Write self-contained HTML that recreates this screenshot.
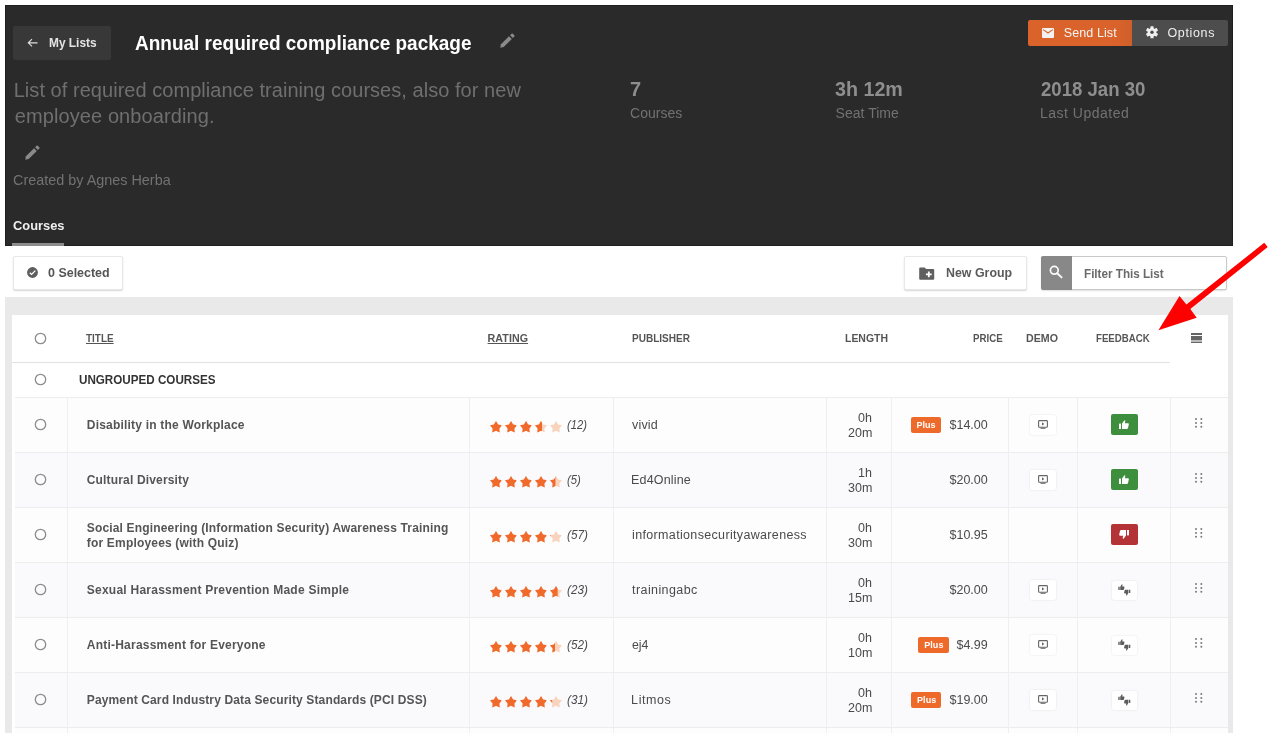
<!DOCTYPE html>
<html><head><meta charset="utf-8"><style>
html,body{margin:0;padding:0;}
body{width:1273px;height:742px;overflow:hidden;background:#fff;position:relative;font-family:"Liberation Sans", sans-serif;}
.a{position:absolute;box-sizing:border-box;}
.t{position:absolute;white-space:nowrap;font-family:"Liberation Sans", sans-serif;}
svg{position:absolute;overflow:visible;}
</style></head><body>
<div class="a" style="left:5px;top:5px;width:1228px;height:241px;background:#2a2a2a;border:1px solid #1f1f1f;"></div>
<div class="a" style="left:12.5px;top:25.5px;width:98px;height:34px;background:#383838;border-radius:2px;"></div>
<svg style="left:27px;top:38px" width="12" height="10" viewBox="0 0 12 10"><path d="M1.3 4.8H10.5M5 1.2L1.3 4.8L5 8.4" fill="none" stroke="#dedede" stroke-width="1.15"/></svg>
<svg style="left:499.2px;top:33.2px" width="16" height="16" viewBox="0 0 15 15"><path d="M1.2 13.8L1.8 10.6L9.4 3L12 5.6L4.4 13.2Z" fill="#8a8a8a"/><path d="M10.4 2L11.8 0.6Q12.3 0.1 12.8 0.6L14.4 2.2Q14.9 2.7 14.4 3.2L13 4.6Z" fill="#8a8a8a"/></svg>
<svg style="left:24.4px;top:145.2px" width="16" height="16" viewBox="0 0 15 15"><path d="M1.2 13.8L1.8 10.6L9.4 3L12 5.6L4.4 13.2Z" fill="#8a8a8a"/><path d="M10.4 2L11.8 0.6Q12.3 0.1 12.8 0.6L14.4 2.2Q14.9 2.7 14.4 3.2L13 4.6Z" fill="#8a8a8a"/></svg>
<div class="a" style="left:1028px;top:20px;width:103.5px;height:26px;background:linear-gradient(90deg,#d9632b 0%,#d9632b 85%,#cf5f2a 100%);border-radius:2px 0 0 2px;"></div>
<div class="a" style="left:1131.5px;top:20px;width:96px;height:26px;background:#4d4d4d;border-radius:0 2px 2px 0;"></div>
<svg style="left:1042px;top:27.5px" width="12" height="10" viewBox="0 0 12 10"><rect x="0" y="0" width="12" height="10" rx="1" fill="#f2f2f2"/><path d="M1.2 1.6L6 5L10.8 1.6" fill="none" stroke="#d9632b" stroke-width="1.1"/></svg>
<svg style="left:1146px;top:26px" width="12" height="12.5" viewBox="-6 -6.25 12 12.5"><g fill="#f0f0f0"><circle r="4.3"/><rect x="-1.6" y="-6.1" width="3.2" height="3" rx="0.6" transform="rotate(0)"/><rect x="-1.6" y="-6.1" width="3.2" height="3" rx="0.6" transform="rotate(60)"/><rect x="-1.6" y="-6.1" width="3.2" height="3" rx="0.6" transform="rotate(120)"/><rect x="-1.6" y="-6.1" width="3.2" height="3" rx="0.6" transform="rotate(180)"/><rect x="-1.6" y="-6.1" width="3.2" height="3" rx="0.6" transform="rotate(240)"/><rect x="-1.6" y="-6.1" width="3.2" height="3" rx="0.6" transform="rotate(300)"/></g><circle r="1.7" fill="#4d4d4d"/></svg>
<div class="a" style="left:12px;top:243px;width:52px;height:3px;background:#8c8c8c;"></div>
<div class="a" style="left:13px;top:256px;width:110px;height:34px;background:#fff;border:1px solid #e8e8e8;border-radius:2px;box-shadow:0 1px 1.5px rgba(0,0,0,0.16);"></div>
<svg style="left:27px;top:267px" width="11" height="11" viewBox="0 0 11 11"><circle cx="5.5" cy="5.5" r="5.4" fill="#5e5e5e"/><path d="M2.8 5.8L4.6 7.4L8.3 3.6" fill="none" stroke="#fff" stroke-width="1.3"/></svg>
<div class="a" style="left:904px;top:256px;width:123px;height:34px;background:#fff;border:1px solid #e8e8e8;border-radius:2px;box-shadow:0 1px 1.5px rgba(0,0,0,0.16);"></div>
<svg style="left:919px;top:266.5px" width="15.5" height="13" viewBox="0 0 15.5 13"><path d="M1.2 0.5H5.6L7.3 2H14.2Q15.2 2 15.2 3V11.8Q15.2 12.8 14.2 12.8H1.2Q0.2 12.8 0.2 11.8V1.5Q0.2 0.5 1.2 0.5Z" fill="#5f5f5f"/><path d="M9.8 4.4V10.2M6.9 7.3H12.7" stroke="#fff" stroke-width="1.8"/></svg>
<div class="a" style="left:1041px;top:256px;width:186px;height:34px;background:#fff;border:1px solid #c9c9c9;border-radius:2px;box-shadow:0 1px 1.5px rgba(0,0,0,0.12);"></div>
<div class="a" style="left:1041px;top:256px;width:31px;height:34px;background:#888888;border-radius:2px 0 0 2px;"></div>
<svg style="left:1049px;top:265px" width="14" height="14" viewBox="0 0 14 14"><circle cx="5.3" cy="5.3" r="3.9" fill="none" stroke="#fafafa" stroke-width="1.7"/><path d="M8.2 8.2L12.6 12.4" stroke="#fafafa" stroke-width="1.9" stroke-linecap="round"/></svg>
<div class="a" style="left:5px;top:297px;width:1228px;height:436px;background:#e9e9e9;"></div>
<div class="a" style="left:12px;top:315px;width:1216px;height:418px;background:#fff;"></div>
<div class="a" style="left:12px;top:362px;width:1158px;height:1px;background:#e2e2e2;"></div>
<svg style="left:34.4px;top:331.5px" width="13" height="13" viewBox="0 0 13 13"><circle cx="6.5" cy="6.5" r="5.2" fill="none" stroke="#8c8c8c" stroke-width="1.3"/></svg>
<svg style="left:34.4px;top:372.8px" width="13" height="13" viewBox="0 0 13 13"><circle cx="6.5" cy="6.5" r="5.2" fill="none" stroke="#8c8c8c" stroke-width="1.3"/></svg>
<div class="a" style="left:1191px;top:333px;width:11px;height:1.8px;background:#666;"></div>
<div class="a" style="left:1191px;top:336.2px;width:11px;height:3.6px;background:#666;"></div>
<div class="a" style="left:1191px;top:339.8px;width:11px;height:2.2px;background:#bbb;"></div>
<div class="a" style="left:1191px;top:342px;width:11px;height:1.2px;background:#666;"></div>
<div class="a" style="left:15px;top:397px;width:1213px;height:55px;background:#fdfdfd;border-top:1px solid #ededed;"></div>
<div class="a" style="left:67px;top:397px;width:1px;height:55px;background:#efefef;"></div>
<div class="a" style="left:469px;top:397px;width:1px;height:55px;background:#efefef;"></div>
<div class="a" style="left:613px;top:397px;width:1px;height:55px;background:#efefef;"></div>
<div class="a" style="left:826px;top:397px;width:1px;height:55px;background:#efefef;"></div>
<div class="a" style="left:891px;top:397px;width:1px;height:55px;background:#efefef;"></div>
<div class="a" style="left:1008px;top:397px;width:1px;height:55px;background:#efefef;"></div>
<div class="a" style="left:1077px;top:397px;width:1px;height:55px;background:#efefef;"></div>
<div class="a" style="left:1170px;top:397px;width:1px;height:55px;background:#efefef;"></div>
<svg style="left:34.4px;top:417.5px" width="13" height="13" viewBox="0 0 13 13"><circle cx="6.5" cy="6.5" r="5.2" fill="none" stroke="#8c8c8c" stroke-width="1.3"/></svg>
<svg style="left:489.6px;top:420.5px" width="74" height="12" viewBox="0 0 74 12"><g transform="translate(0,0)"><path d="M6.00 0.00L8.07 3.45L11.99 4.35L9.36 7.39L9.70 11.40L6.00 9.83L2.30 11.40L2.64 7.39L0.01 4.35L3.93 3.45Z" fill="#f8d3be"/><clipPath id="c0_0"><rect x="0" y="0" width="11.50" height="12"/></clipPath><path d="M6.00 0.00L8.07 3.45L11.99 4.35L9.36 7.39L9.70 11.40L6.00 9.83L2.30 11.40L2.64 7.39L0.01 4.35L3.93 3.45Z" fill="#ef6a2b" clip-path="url(#c0_0)"/></g><g transform="translate(15,0)"><path d="M6.00 0.00L8.07 3.45L11.99 4.35L9.36 7.39L9.70 11.40L6.00 9.83L2.30 11.40L2.64 7.39L0.01 4.35L3.93 3.45Z" fill="#f8d3be"/><clipPath id="c0_1"><rect x="0" y="0" width="11.50" height="12"/></clipPath><path d="M6.00 0.00L8.07 3.45L11.99 4.35L9.36 7.39L9.70 11.40L6.00 9.83L2.30 11.40L2.64 7.39L0.01 4.35L3.93 3.45Z" fill="#ef6a2b" clip-path="url(#c0_1)"/></g><g transform="translate(30,0)"><path d="M6.00 0.00L8.07 3.45L11.99 4.35L9.36 7.39L9.70 11.40L6.00 9.83L2.30 11.40L2.64 7.39L0.01 4.35L3.93 3.45Z" fill="#f8d3be"/><clipPath id="c0_2"><rect x="0" y="0" width="11.50" height="12"/></clipPath><path d="M6.00 0.00L8.07 3.45L11.99 4.35L9.36 7.39L9.70 11.40L6.00 9.83L2.30 11.40L2.64 7.39L0.01 4.35L3.93 3.45Z" fill="#ef6a2b" clip-path="url(#c0_2)"/></g><g transform="translate(45,0)"><path d="M6.00 0.00L8.07 3.45L11.99 4.35L9.36 7.39L9.70 11.40L6.00 9.83L2.30 11.40L2.64 7.39L0.01 4.35L3.93 3.45Z" fill="#f8d3be"/><clipPath id="c0_3"><rect x="0" y="0" width="7.10" height="12"/></clipPath><path d="M6.00 0.00L8.07 3.45L11.99 4.35L9.36 7.39L9.70 11.40L6.00 9.83L2.30 11.40L2.64 7.39L0.01 4.35L3.93 3.45Z" fill="#ef6a2b" clip-path="url(#c0_3)"/></g><g transform="translate(60,0)"><path d="M6.00 0.00L8.07 3.45L11.99 4.35L9.36 7.39L9.70 11.40L6.00 9.83L2.30 11.40L2.64 7.39L0.01 4.35L3.93 3.45Z" fill="#f8d3be"/></g></svg>
<div class="a" style="left:910.6px;top:416.8px;width:30.899999999999977px;height:16.4px;background:#ee6a2b;border-radius:2px;"></div>
<div class="a" style="left:1030px;top:414.5px;width:26px;height:20px;background:#fff;border-radius:2px;box-shadow:0 0 2px rgba(0,0,0,0.12);"></div>
<svg style="left:1037.5px;top:420px" width="10" height="9" viewBox="0 0 10 9"><rect x="0.6" y="0.6" width="8.8" height="6.6" rx="0.8" fill="none" stroke="#666" stroke-width="1.1"/><path d="M4 2.3L6.4 3.9L4 5.5Z" fill="#666"/><path d="M2.5 8.3H7.5" stroke="#666" stroke-width="1"/></svg>
<div class="a" style="left:1111px;top:414.3px;width:27px;height:20.5px;background:#3d8f3d;border-radius:2px;"></div>
<svg style="left:1119px;top:419.5px" width="10" height="9" viewBox="0 0 10 9"><rect x="0" y="3.6" width="2" height="5.4" fill="#fff"/><path d="M3 3.6L5.2 0.4Q6.2 -0.2 6.3 1L5.9 3.2H9Q10 3.3 9.8 4.4L9 8Q8.8 9 7.8 9H3Z" fill="#fff"/></svg>
<svg style="left:1195px;top:418.2px" width="8" height="10" viewBox="0 0 8 10"><circle cx="1.0" cy="1.0" r="1.0" fill="#7a7a7a"/><circle cx="1.0" cy="4.9" r="1.0" fill="#7a7a7a"/><circle cx="1.0" cy="8.8" r="1.0" fill="#7a7a7a"/><circle cx="6.3" cy="1.0" r="1.0" fill="#7a7a7a"/><circle cx="6.3" cy="4.9" r="1.0" fill="#7a7a7a"/><circle cx="6.3" cy="8.8" r="1.0" fill="#7a7a7a"/></svg>
<div class="a" style="left:15px;top:452px;width:1213px;height:55px;background:#faf9fc;border-top:1px solid #ededed;"></div>
<div class="a" style="left:67px;top:452px;width:1px;height:55px;background:#efefef;"></div>
<div class="a" style="left:469px;top:452px;width:1px;height:55px;background:#efefef;"></div>
<div class="a" style="left:613px;top:452px;width:1px;height:55px;background:#efefef;"></div>
<div class="a" style="left:826px;top:452px;width:1px;height:55px;background:#efefef;"></div>
<div class="a" style="left:891px;top:452px;width:1px;height:55px;background:#efefef;"></div>
<div class="a" style="left:1008px;top:452px;width:1px;height:55px;background:#efefef;"></div>
<div class="a" style="left:1077px;top:452px;width:1px;height:55px;background:#efefef;"></div>
<div class="a" style="left:1170px;top:452px;width:1px;height:55px;background:#efefef;"></div>
<svg style="left:34.4px;top:472.5px" width="13" height="13" viewBox="0 0 13 13"><circle cx="6.5" cy="6.5" r="5.2" fill="none" stroke="#8c8c8c" stroke-width="1.3"/></svg>
<svg style="left:489.6px;top:475.5px" width="74" height="12" viewBox="0 0 74 12"><g transform="translate(0,0)"><path d="M6.00 0.00L8.07 3.45L11.99 4.35L9.36 7.39L9.70 11.40L6.00 9.83L2.30 11.40L2.64 7.39L0.01 4.35L3.93 3.45Z" fill="#f8d3be"/><clipPath id="c1_0"><rect x="0" y="0" width="11.50" height="12"/></clipPath><path d="M6.00 0.00L8.07 3.45L11.99 4.35L9.36 7.39L9.70 11.40L6.00 9.83L2.30 11.40L2.64 7.39L0.01 4.35L3.93 3.45Z" fill="#ef6a2b" clip-path="url(#c1_0)"/></g><g transform="translate(15,0)"><path d="M6.00 0.00L8.07 3.45L11.99 4.35L9.36 7.39L9.70 11.40L6.00 9.83L2.30 11.40L2.64 7.39L0.01 4.35L3.93 3.45Z" fill="#f8d3be"/><clipPath id="c1_1"><rect x="0" y="0" width="11.50" height="12"/></clipPath><path d="M6.00 0.00L8.07 3.45L11.99 4.35L9.36 7.39L9.70 11.40L6.00 9.83L2.30 11.40L2.64 7.39L0.01 4.35L3.93 3.45Z" fill="#ef6a2b" clip-path="url(#c1_1)"/></g><g transform="translate(30,0)"><path d="M6.00 0.00L8.07 3.45L11.99 4.35L9.36 7.39L9.70 11.40L6.00 9.83L2.30 11.40L2.64 7.39L0.01 4.35L3.93 3.45Z" fill="#f8d3be"/><clipPath id="c1_2"><rect x="0" y="0" width="11.50" height="12"/></clipPath><path d="M6.00 0.00L8.07 3.45L11.99 4.35L9.36 7.39L9.70 11.40L6.00 9.83L2.30 11.40L2.64 7.39L0.01 4.35L3.93 3.45Z" fill="#ef6a2b" clip-path="url(#c1_2)"/></g><g transform="translate(45,0)"><path d="M6.00 0.00L8.07 3.45L11.99 4.35L9.36 7.39L9.70 11.40L6.00 9.83L2.30 11.40L2.64 7.39L0.01 4.35L3.93 3.45Z" fill="#f8d3be"/><clipPath id="c1_3"><rect x="0" y="0" width="11.50" height="12"/></clipPath><path d="M6.00 0.00L8.07 3.45L11.99 4.35L9.36 7.39L9.70 11.40L6.00 9.83L2.30 11.40L2.64 7.39L0.01 4.35L3.93 3.45Z" fill="#ef6a2b" clip-path="url(#c1_3)"/></g><g transform="translate(60,0)"><path d="M6.00 0.00L8.07 3.45L11.99 4.35L9.36 7.39L9.70 11.40L6.00 9.83L2.30 11.40L2.64 7.39L0.01 4.35L3.93 3.45Z" fill="#f8d3be"/><clipPath id="c1_4"><rect x="0" y="0" width="5.45" height="12"/></clipPath><path d="M6.00 0.00L8.07 3.45L11.99 4.35L9.36 7.39L9.70 11.40L6.00 9.83L2.30 11.40L2.64 7.39L0.01 4.35L3.93 3.45Z" fill="#ef6a2b" clip-path="url(#c1_4)"/></g></svg>
<div class="a" style="left:1030px;top:469.5px;width:26px;height:20px;background:#fff;border-radius:2px;box-shadow:0 0 2px rgba(0,0,0,0.12);"></div>
<svg style="left:1037.5px;top:475px" width="10" height="9" viewBox="0 0 10 9"><rect x="0.6" y="0.6" width="8.8" height="6.6" rx="0.8" fill="none" stroke="#666" stroke-width="1.1"/><path d="M4 2.3L6.4 3.9L4 5.5Z" fill="#666"/><path d="M2.5 8.3H7.5" stroke="#666" stroke-width="1"/></svg>
<div class="a" style="left:1111px;top:469.3px;width:27px;height:20.5px;background:#3d8f3d;border-radius:2px;"></div>
<svg style="left:1119px;top:474.5px" width="10" height="9" viewBox="0 0 10 9"><rect x="0" y="3.6" width="2" height="5.4" fill="#fff"/><path d="M3 3.6L5.2 0.4Q6.2 -0.2 6.3 1L5.9 3.2H9Q10 3.3 9.8 4.4L9 8Q8.8 9 7.8 9H3Z" fill="#fff"/></svg>
<svg style="left:1195px;top:473.2px" width="8" height="10" viewBox="0 0 8 10"><circle cx="1.0" cy="1.0" r="1.0" fill="#7a7a7a"/><circle cx="1.0" cy="4.9" r="1.0" fill="#7a7a7a"/><circle cx="1.0" cy="8.8" r="1.0" fill="#7a7a7a"/><circle cx="6.3" cy="1.0" r="1.0" fill="#7a7a7a"/><circle cx="6.3" cy="4.9" r="1.0" fill="#7a7a7a"/><circle cx="6.3" cy="8.8" r="1.0" fill="#7a7a7a"/></svg>
<div class="a" style="left:15px;top:507px;width:1213px;height:55px;background:#fdfdfd;border-top:1px solid #ededed;"></div>
<div class="a" style="left:67px;top:507px;width:1px;height:55px;background:#efefef;"></div>
<div class="a" style="left:469px;top:507px;width:1px;height:55px;background:#efefef;"></div>
<div class="a" style="left:613px;top:507px;width:1px;height:55px;background:#efefef;"></div>
<div class="a" style="left:826px;top:507px;width:1px;height:55px;background:#efefef;"></div>
<div class="a" style="left:891px;top:507px;width:1px;height:55px;background:#efefef;"></div>
<div class="a" style="left:1008px;top:507px;width:1px;height:55px;background:#efefef;"></div>
<div class="a" style="left:1077px;top:507px;width:1px;height:55px;background:#efefef;"></div>
<div class="a" style="left:1170px;top:507px;width:1px;height:55px;background:#efefef;"></div>
<svg style="left:34.4px;top:527.5px" width="13" height="13" viewBox="0 0 13 13"><circle cx="6.5" cy="6.5" r="5.2" fill="none" stroke="#8c8c8c" stroke-width="1.3"/></svg>
<svg style="left:489.6px;top:530.5px" width="74" height="12" viewBox="0 0 74 12"><g transform="translate(0,0)"><path d="M6.00 0.00L8.07 3.45L11.99 4.35L9.36 7.39L9.70 11.40L6.00 9.83L2.30 11.40L2.64 7.39L0.01 4.35L3.93 3.45Z" fill="#f8d3be"/><clipPath id="c2_0"><rect x="0" y="0" width="11.50" height="12"/></clipPath><path d="M6.00 0.00L8.07 3.45L11.99 4.35L9.36 7.39L9.70 11.40L6.00 9.83L2.30 11.40L2.64 7.39L0.01 4.35L3.93 3.45Z" fill="#ef6a2b" clip-path="url(#c2_0)"/></g><g transform="translate(15,0)"><path d="M6.00 0.00L8.07 3.45L11.99 4.35L9.36 7.39L9.70 11.40L6.00 9.83L2.30 11.40L2.64 7.39L0.01 4.35L3.93 3.45Z" fill="#f8d3be"/><clipPath id="c2_1"><rect x="0" y="0" width="11.50" height="12"/></clipPath><path d="M6.00 0.00L8.07 3.45L11.99 4.35L9.36 7.39L9.70 11.40L6.00 9.83L2.30 11.40L2.64 7.39L0.01 4.35L3.93 3.45Z" fill="#ef6a2b" clip-path="url(#c2_1)"/></g><g transform="translate(30,0)"><path d="M6.00 0.00L8.07 3.45L11.99 4.35L9.36 7.39L9.70 11.40L6.00 9.83L2.30 11.40L2.64 7.39L0.01 4.35L3.93 3.45Z" fill="#f8d3be"/><clipPath id="c2_2"><rect x="0" y="0" width="11.50" height="12"/></clipPath><path d="M6.00 0.00L8.07 3.45L11.99 4.35L9.36 7.39L9.70 11.40L6.00 9.83L2.30 11.40L2.64 7.39L0.01 4.35L3.93 3.45Z" fill="#ef6a2b" clip-path="url(#c2_2)"/></g><g transform="translate(45,0)"><path d="M6.00 0.00L8.07 3.45L11.99 4.35L9.36 7.39L9.70 11.40L6.00 9.83L2.30 11.40L2.64 7.39L0.01 4.35L3.93 3.45Z" fill="#f8d3be"/><clipPath id="c2_3"><rect x="0" y="0" width="11.50" height="12"/></clipPath><path d="M6.00 0.00L8.07 3.45L11.99 4.35L9.36 7.39L9.70 11.40L6.00 9.83L2.30 11.40L2.64 7.39L0.01 4.35L3.93 3.45Z" fill="#ef6a2b" clip-path="url(#c2_3)"/></g><g transform="translate(60,0)"><path d="M6.00 0.00L8.07 3.45L11.99 4.35L9.36 7.39L9.70 11.40L6.00 9.83L2.30 11.40L2.64 7.39L0.01 4.35L3.93 3.45Z" fill="#f8d3be"/><clipPath id="c2_4"><rect x="0" y="0" width="1.05" height="12"/></clipPath><path d="M6.00 0.00L8.07 3.45L11.99 4.35L9.36 7.39L9.70 11.40L6.00 9.83L2.30 11.40L2.64 7.39L0.01 4.35L3.93 3.45Z" fill="#ef6a2b" clip-path="url(#c2_4)"/></g></svg>
<div class="a" style="left:1111px;top:524.3px;width:27px;height:20.5px;background:#b33336;border-radius:2px;"></div>
<svg style="left:1119px;top:529.5px" width="10" height="9" viewBox="0 0 10 9"><g transform="rotate(180 5 4.5)"><rect x="0" y="3.6" width="2" height="5.4" fill="#fff"/><path d="M3 3.6L5.2 0.4Q6.2 -0.2 6.3 1L5.9 3.2H9Q10 3.3 9.8 4.4L9 8Q8.8 9 7.8 9H3Z" fill="#fff"/></g></svg>
<svg style="left:1195px;top:528.2px" width="8" height="10" viewBox="0 0 8 10"><circle cx="1.0" cy="1.0" r="1.0" fill="#7a7a7a"/><circle cx="1.0" cy="4.9" r="1.0" fill="#7a7a7a"/><circle cx="1.0" cy="8.8" r="1.0" fill="#7a7a7a"/><circle cx="6.3" cy="1.0" r="1.0" fill="#7a7a7a"/><circle cx="6.3" cy="4.9" r="1.0" fill="#7a7a7a"/><circle cx="6.3" cy="8.8" r="1.0" fill="#7a7a7a"/></svg>
<div class="a" style="left:15px;top:562px;width:1213px;height:55px;background:#faf9fc;border-top:1px solid #ededed;"></div>
<div class="a" style="left:67px;top:562px;width:1px;height:55px;background:#efefef;"></div>
<div class="a" style="left:469px;top:562px;width:1px;height:55px;background:#efefef;"></div>
<div class="a" style="left:613px;top:562px;width:1px;height:55px;background:#efefef;"></div>
<div class="a" style="left:826px;top:562px;width:1px;height:55px;background:#efefef;"></div>
<div class="a" style="left:891px;top:562px;width:1px;height:55px;background:#efefef;"></div>
<div class="a" style="left:1008px;top:562px;width:1px;height:55px;background:#efefef;"></div>
<div class="a" style="left:1077px;top:562px;width:1px;height:55px;background:#efefef;"></div>
<div class="a" style="left:1170px;top:562px;width:1px;height:55px;background:#efefef;"></div>
<svg style="left:34.4px;top:582.5px" width="13" height="13" viewBox="0 0 13 13"><circle cx="6.5" cy="6.5" r="5.2" fill="none" stroke="#8c8c8c" stroke-width="1.3"/></svg>
<svg style="left:489.6px;top:585.5px" width="74" height="12" viewBox="0 0 74 12"><g transform="translate(0,0)"><path d="M6.00 0.00L8.07 3.45L11.99 4.35L9.36 7.39L9.70 11.40L6.00 9.83L2.30 11.40L2.64 7.39L0.01 4.35L3.93 3.45Z" fill="#f8d3be"/><clipPath id="c3_0"><rect x="0" y="0" width="11.50" height="12"/></clipPath><path d="M6.00 0.00L8.07 3.45L11.99 4.35L9.36 7.39L9.70 11.40L6.00 9.83L2.30 11.40L2.64 7.39L0.01 4.35L3.93 3.45Z" fill="#ef6a2b" clip-path="url(#c3_0)"/></g><g transform="translate(15,0)"><path d="M6.00 0.00L8.07 3.45L11.99 4.35L9.36 7.39L9.70 11.40L6.00 9.83L2.30 11.40L2.64 7.39L0.01 4.35L3.93 3.45Z" fill="#f8d3be"/><clipPath id="c3_1"><rect x="0" y="0" width="11.50" height="12"/></clipPath><path d="M6.00 0.00L8.07 3.45L11.99 4.35L9.36 7.39L9.70 11.40L6.00 9.83L2.30 11.40L2.64 7.39L0.01 4.35L3.93 3.45Z" fill="#ef6a2b" clip-path="url(#c3_1)"/></g><g transform="translate(30,0)"><path d="M6.00 0.00L8.07 3.45L11.99 4.35L9.36 7.39L9.70 11.40L6.00 9.83L2.30 11.40L2.64 7.39L0.01 4.35L3.93 3.45Z" fill="#f8d3be"/><clipPath id="c3_2"><rect x="0" y="0" width="11.50" height="12"/></clipPath><path d="M6.00 0.00L8.07 3.45L11.99 4.35L9.36 7.39L9.70 11.40L6.00 9.83L2.30 11.40L2.64 7.39L0.01 4.35L3.93 3.45Z" fill="#ef6a2b" clip-path="url(#c3_2)"/></g><g transform="translate(45,0)"><path d="M6.00 0.00L8.07 3.45L11.99 4.35L9.36 7.39L9.70 11.40L6.00 9.83L2.30 11.40L2.64 7.39L0.01 4.35L3.93 3.45Z" fill="#f8d3be"/><clipPath id="c3_3"><rect x="0" y="0" width="11.50" height="12"/></clipPath><path d="M6.00 0.00L8.07 3.45L11.99 4.35L9.36 7.39L9.70 11.40L6.00 9.83L2.30 11.40L2.64 7.39L0.01 4.35L3.93 3.45Z" fill="#ef6a2b" clip-path="url(#c3_3)"/></g><g transform="translate(60,0)"><path d="M6.00 0.00L8.07 3.45L11.99 4.35L9.36 7.39L9.70 11.40L6.00 9.83L2.30 11.40L2.64 7.39L0.01 4.35L3.93 3.45Z" fill="#f8d3be"/><clipPath id="c3_4"><rect x="0" y="0" width="7.65" height="12"/></clipPath><path d="M6.00 0.00L8.07 3.45L11.99 4.35L9.36 7.39L9.70 11.40L6.00 9.83L2.30 11.40L2.64 7.39L0.01 4.35L3.93 3.45Z" fill="#ef6a2b" clip-path="url(#c3_4)"/></g></svg>
<div class="a" style="left:1030px;top:579.5px;width:26px;height:20px;background:#fff;border-radius:2px;box-shadow:0 0 2px rgba(0,0,0,0.12);"></div>
<svg style="left:1037.5px;top:585px" width="10" height="9" viewBox="0 0 10 9"><rect x="0.6" y="0.6" width="8.8" height="6.6" rx="0.8" fill="none" stroke="#666" stroke-width="1.1"/><path d="M4 2.3L6.4 3.9L4 5.5Z" fill="#666"/><path d="M2.5 8.3H7.5" stroke="#666" stroke-width="1"/></svg>
<div class="a" style="left:1111.5px;top:580.5px;width:25.5px;height:19.5px;background:#fff;border-radius:2px;box-shadow:0 0 2px rgba(0,0,0,0.12);"></div>
<svg style="left:1117.5px;top:584px" width="14" height="13" viewBox="0 0 14 13"><g transform="translate(0.3,0) scale(0.8)"><path d="M0 3.4H1.7V7.6H0Z M2.4 3.4L4.3 0.5Q5.3 0 5.3 1.1L5 3H7.1Q7.9 3.2 7.7 4.1L7.1 7Q6.9 7.6 6.2 7.6H2.4Z" fill="#5c5c5c"/></g><g transform="translate(12.3,11.8) rotate(180) scale(0.8)"><path d="M0 3.4H1.7V7.6H0Z M2.4 3.4L4.3 0.5Q5.3 0 5.3 1.1L5 3H7.1Q7.9 3.2 7.7 4.1L7.1 7Q6.9 7.6 6.2 7.6H2.4Z" fill="#5c5c5c"/></g></svg>
<svg style="left:1195px;top:583.2px" width="8" height="10" viewBox="0 0 8 10"><circle cx="1.0" cy="1.0" r="1.0" fill="#7a7a7a"/><circle cx="1.0" cy="4.9" r="1.0" fill="#7a7a7a"/><circle cx="1.0" cy="8.8" r="1.0" fill="#7a7a7a"/><circle cx="6.3" cy="1.0" r="1.0" fill="#7a7a7a"/><circle cx="6.3" cy="4.9" r="1.0" fill="#7a7a7a"/><circle cx="6.3" cy="8.8" r="1.0" fill="#7a7a7a"/></svg>
<div class="a" style="left:15px;top:617px;width:1213px;height:55px;background:#fdfdfd;border-top:1px solid #ededed;"></div>
<div class="a" style="left:67px;top:617px;width:1px;height:55px;background:#efefef;"></div>
<div class="a" style="left:469px;top:617px;width:1px;height:55px;background:#efefef;"></div>
<div class="a" style="left:613px;top:617px;width:1px;height:55px;background:#efefef;"></div>
<div class="a" style="left:826px;top:617px;width:1px;height:55px;background:#efefef;"></div>
<div class="a" style="left:891px;top:617px;width:1px;height:55px;background:#efefef;"></div>
<div class="a" style="left:1008px;top:617px;width:1px;height:55px;background:#efefef;"></div>
<div class="a" style="left:1077px;top:617px;width:1px;height:55px;background:#efefef;"></div>
<div class="a" style="left:1170px;top:617px;width:1px;height:55px;background:#efefef;"></div>
<svg style="left:34.4px;top:637.5px" width="13" height="13" viewBox="0 0 13 13"><circle cx="6.5" cy="6.5" r="5.2" fill="none" stroke="#8c8c8c" stroke-width="1.3"/></svg>
<svg style="left:489.6px;top:640.5px" width="74" height="12" viewBox="0 0 74 12"><g transform="translate(0,0)"><path d="M6.00 0.00L8.07 3.45L11.99 4.35L9.36 7.39L9.70 11.40L6.00 9.83L2.30 11.40L2.64 7.39L0.01 4.35L3.93 3.45Z" fill="#f8d3be"/><clipPath id="c4_0"><rect x="0" y="0" width="11.50" height="12"/></clipPath><path d="M6.00 0.00L8.07 3.45L11.99 4.35L9.36 7.39L9.70 11.40L6.00 9.83L2.30 11.40L2.64 7.39L0.01 4.35L3.93 3.45Z" fill="#ef6a2b" clip-path="url(#c4_0)"/></g><g transform="translate(15,0)"><path d="M6.00 0.00L8.07 3.45L11.99 4.35L9.36 7.39L9.70 11.40L6.00 9.83L2.30 11.40L2.64 7.39L0.01 4.35L3.93 3.45Z" fill="#f8d3be"/><clipPath id="c4_1"><rect x="0" y="0" width="11.50" height="12"/></clipPath><path d="M6.00 0.00L8.07 3.45L11.99 4.35L9.36 7.39L9.70 11.40L6.00 9.83L2.30 11.40L2.64 7.39L0.01 4.35L3.93 3.45Z" fill="#ef6a2b" clip-path="url(#c4_1)"/></g><g transform="translate(30,0)"><path d="M6.00 0.00L8.07 3.45L11.99 4.35L9.36 7.39L9.70 11.40L6.00 9.83L2.30 11.40L2.64 7.39L0.01 4.35L3.93 3.45Z" fill="#f8d3be"/><clipPath id="c4_2"><rect x="0" y="0" width="11.50" height="12"/></clipPath><path d="M6.00 0.00L8.07 3.45L11.99 4.35L9.36 7.39L9.70 11.40L6.00 9.83L2.30 11.40L2.64 7.39L0.01 4.35L3.93 3.45Z" fill="#ef6a2b" clip-path="url(#c4_2)"/></g><g transform="translate(45,0)"><path d="M6.00 0.00L8.07 3.45L11.99 4.35L9.36 7.39L9.70 11.40L6.00 9.83L2.30 11.40L2.64 7.39L0.01 4.35L3.93 3.45Z" fill="#f8d3be"/><clipPath id="c4_3"><rect x="0" y="0" width="11.50" height="12"/></clipPath><path d="M6.00 0.00L8.07 3.45L11.99 4.35L9.36 7.39L9.70 11.40L6.00 9.83L2.30 11.40L2.64 7.39L0.01 4.35L3.93 3.45Z" fill="#ef6a2b" clip-path="url(#c4_3)"/></g><g transform="translate(60,0)"><path d="M6.00 0.00L8.07 3.45L11.99 4.35L9.36 7.39L9.70 11.40L6.00 9.83L2.30 11.40L2.64 7.39L0.01 4.35L3.93 3.45Z" fill="#f8d3be"/><clipPath id="c4_4"><rect x="0" y="0" width="4.90" height="12"/></clipPath><path d="M6.00 0.00L8.07 3.45L11.99 4.35L9.36 7.39L9.70 11.40L6.00 9.83L2.30 11.40L2.64 7.39L0.01 4.35L3.93 3.45Z" fill="#ef6a2b" clip-path="url(#c4_4)"/></g></svg>
<div class="a" style="left:918.4px;top:636.8px;width:30.200000000000045px;height:16.4px;background:#ee6a2b;border-radius:2px;"></div>
<div class="a" style="left:1030px;top:634.5px;width:26px;height:20px;background:#fff;border-radius:2px;box-shadow:0 0 2px rgba(0,0,0,0.12);"></div>
<svg style="left:1037.5px;top:640px" width="10" height="9" viewBox="0 0 10 9"><rect x="0.6" y="0.6" width="8.8" height="6.6" rx="0.8" fill="none" stroke="#666" stroke-width="1.1"/><path d="M4 2.3L6.4 3.9L4 5.5Z" fill="#666"/><path d="M2.5 8.3H7.5" stroke="#666" stroke-width="1"/></svg>
<div class="a" style="left:1111.5px;top:635.5px;width:25.5px;height:19.5px;background:#fff;border-radius:2px;box-shadow:0 0 2px rgba(0,0,0,0.12);"></div>
<svg style="left:1117.5px;top:639px" width="14" height="13" viewBox="0 0 14 13"><g transform="translate(0.3,0) scale(0.8)"><path d="M0 3.4H1.7V7.6H0Z M2.4 3.4L4.3 0.5Q5.3 0 5.3 1.1L5 3H7.1Q7.9 3.2 7.7 4.1L7.1 7Q6.9 7.6 6.2 7.6H2.4Z" fill="#5c5c5c"/></g><g transform="translate(12.3,11.8) rotate(180) scale(0.8)"><path d="M0 3.4H1.7V7.6H0Z M2.4 3.4L4.3 0.5Q5.3 0 5.3 1.1L5 3H7.1Q7.9 3.2 7.7 4.1L7.1 7Q6.9 7.6 6.2 7.6H2.4Z" fill="#5c5c5c"/></g></svg>
<svg style="left:1195px;top:638.2px" width="8" height="10" viewBox="0 0 8 10"><circle cx="1.0" cy="1.0" r="1.0" fill="#7a7a7a"/><circle cx="1.0" cy="4.9" r="1.0" fill="#7a7a7a"/><circle cx="1.0" cy="8.8" r="1.0" fill="#7a7a7a"/><circle cx="6.3" cy="1.0" r="1.0" fill="#7a7a7a"/><circle cx="6.3" cy="4.9" r="1.0" fill="#7a7a7a"/><circle cx="6.3" cy="8.8" r="1.0" fill="#7a7a7a"/></svg>
<div class="a" style="left:15px;top:672px;width:1213px;height:55px;background:#faf9fc;border-top:1px solid #ededed;"></div>
<div class="a" style="left:67px;top:672px;width:1px;height:55px;background:#efefef;"></div>
<div class="a" style="left:469px;top:672px;width:1px;height:55px;background:#efefef;"></div>
<div class="a" style="left:613px;top:672px;width:1px;height:55px;background:#efefef;"></div>
<div class="a" style="left:826px;top:672px;width:1px;height:55px;background:#efefef;"></div>
<div class="a" style="left:891px;top:672px;width:1px;height:55px;background:#efefef;"></div>
<div class="a" style="left:1008px;top:672px;width:1px;height:55px;background:#efefef;"></div>
<div class="a" style="left:1077px;top:672px;width:1px;height:55px;background:#efefef;"></div>
<div class="a" style="left:1170px;top:672px;width:1px;height:55px;background:#efefef;"></div>
<svg style="left:34.4px;top:692.5px" width="13" height="13" viewBox="0 0 13 13"><circle cx="6.5" cy="6.5" r="5.2" fill="none" stroke="#8c8c8c" stroke-width="1.3"/></svg>
<svg style="left:489.6px;top:695.5px" width="74" height="12" viewBox="0 0 74 12"><g transform="translate(0,0)"><path d="M6.00 0.00L8.07 3.45L11.99 4.35L9.36 7.39L9.70 11.40L6.00 9.83L2.30 11.40L2.64 7.39L0.01 4.35L3.93 3.45Z" fill="#f8d3be"/><clipPath id="c5_0"><rect x="0" y="0" width="11.50" height="12"/></clipPath><path d="M6.00 0.00L8.07 3.45L11.99 4.35L9.36 7.39L9.70 11.40L6.00 9.83L2.30 11.40L2.64 7.39L0.01 4.35L3.93 3.45Z" fill="#ef6a2b" clip-path="url(#c5_0)"/></g><g transform="translate(15,0)"><path d="M6.00 0.00L8.07 3.45L11.99 4.35L9.36 7.39L9.70 11.40L6.00 9.83L2.30 11.40L2.64 7.39L0.01 4.35L3.93 3.45Z" fill="#f8d3be"/><clipPath id="c5_1"><rect x="0" y="0" width="11.50" height="12"/></clipPath><path d="M6.00 0.00L8.07 3.45L11.99 4.35L9.36 7.39L9.70 11.40L6.00 9.83L2.30 11.40L2.64 7.39L0.01 4.35L3.93 3.45Z" fill="#ef6a2b" clip-path="url(#c5_1)"/></g><g transform="translate(30,0)"><path d="M6.00 0.00L8.07 3.45L11.99 4.35L9.36 7.39L9.70 11.40L6.00 9.83L2.30 11.40L2.64 7.39L0.01 4.35L3.93 3.45Z" fill="#f8d3be"/><clipPath id="c5_2"><rect x="0" y="0" width="11.50" height="12"/></clipPath><path d="M6.00 0.00L8.07 3.45L11.99 4.35L9.36 7.39L9.70 11.40L6.00 9.83L2.30 11.40L2.64 7.39L0.01 4.35L3.93 3.45Z" fill="#ef6a2b" clip-path="url(#c5_2)"/></g><g transform="translate(45,0)"><path d="M6.00 0.00L8.07 3.45L11.99 4.35L9.36 7.39L9.70 11.40L6.00 9.83L2.30 11.40L2.64 7.39L0.01 4.35L3.93 3.45Z" fill="#f8d3be"/><clipPath id="c5_3"><rect x="0" y="0" width="11.50" height="12"/></clipPath><path d="M6.00 0.00L8.07 3.45L11.99 4.35L9.36 7.39L9.70 11.40L6.00 9.83L2.30 11.40L2.64 7.39L0.01 4.35L3.93 3.45Z" fill="#ef6a2b" clip-path="url(#c5_3)"/></g><g transform="translate(60,0)"><path d="M6.00 0.00L8.07 3.45L11.99 4.35L9.36 7.39L9.70 11.40L6.00 9.83L2.30 11.40L2.64 7.39L0.01 4.35L3.93 3.45Z" fill="#f8d3be"/><clipPath id="c5_4"><rect x="0" y="0" width="2.15" height="12"/></clipPath><path d="M6.00 0.00L8.07 3.45L11.99 4.35L9.36 7.39L9.70 11.40L6.00 9.83L2.30 11.40L2.64 7.39L0.01 4.35L3.93 3.45Z" fill="#ef6a2b" clip-path="url(#c5_4)"/></g></svg>
<div class="a" style="left:911.2px;top:691.8px;width:29.799999999999955px;height:16.4px;background:#ee6a2b;border-radius:2px;"></div>
<div class="a" style="left:1030px;top:689.5px;width:26px;height:20px;background:#fff;border-radius:2px;box-shadow:0 0 2px rgba(0,0,0,0.12);"></div>
<svg style="left:1037.5px;top:695px" width="10" height="9" viewBox="0 0 10 9"><rect x="0.6" y="0.6" width="8.8" height="6.6" rx="0.8" fill="none" stroke="#666" stroke-width="1.1"/><path d="M4 2.3L6.4 3.9L4 5.5Z" fill="#666"/><path d="M2.5 8.3H7.5" stroke="#666" stroke-width="1"/></svg>
<div class="a" style="left:1111.5px;top:690.5px;width:25.5px;height:19.5px;background:#fff;border-radius:2px;box-shadow:0 0 2px rgba(0,0,0,0.12);"></div>
<svg style="left:1117.5px;top:694px" width="14" height="13" viewBox="0 0 14 13"><g transform="translate(0.3,0) scale(0.8)"><path d="M0 3.4H1.7V7.6H0Z M2.4 3.4L4.3 0.5Q5.3 0 5.3 1.1L5 3H7.1Q7.9 3.2 7.7 4.1L7.1 7Q6.9 7.6 6.2 7.6H2.4Z" fill="#5c5c5c"/></g><g transform="translate(12.3,11.8) rotate(180) scale(0.8)"><path d="M0 3.4H1.7V7.6H0Z M2.4 3.4L4.3 0.5Q5.3 0 5.3 1.1L5 3H7.1Q7.9 3.2 7.7 4.1L7.1 7Q6.9 7.6 6.2 7.6H2.4Z" fill="#5c5c5c"/></g></svg>
<svg style="left:1195px;top:693.2px" width="8" height="10" viewBox="0 0 8 10"><circle cx="1.0" cy="1.0" r="1.0" fill="#7a7a7a"/><circle cx="1.0" cy="4.9" r="1.0" fill="#7a7a7a"/><circle cx="1.0" cy="8.8" r="1.0" fill="#7a7a7a"/><circle cx="6.3" cy="1.0" r="1.0" fill="#7a7a7a"/><circle cx="6.3" cy="4.9" r="1.0" fill="#7a7a7a"/><circle cx="6.3" cy="8.8" r="1.0" fill="#7a7a7a"/></svg>
<div class="a" style="left:15px;top:727px;width:1213px;height:6px;background:#fdfdfd;border-top:1px solid #ececec;"></div>
<div class="a" style="left:67px;top:727px;width:1px;height:6px;background:#efefef;"></div>
<div class="a" style="left:469px;top:727px;width:1px;height:6px;background:#efefef;"></div>
<div class="a" style="left:613px;top:727px;width:1px;height:6px;background:#efefef;"></div>
<div class="a" style="left:826px;top:727px;width:1px;height:6px;background:#efefef;"></div>
<div class="a" style="left:891px;top:727px;width:1px;height:6px;background:#efefef;"></div>
<div class="a" style="left:1008px;top:727px;width:1px;height:6px;background:#efefef;"></div>
<div class="a" style="left:1077px;top:727px;width:1px;height:6px;background:#efefef;"></div>
<div class="a" style="left:1170px;top:727px;width:1px;height:6px;background:#efefef;"></div>
<div style="position:absolute;left:0;top:0;width:1273px;height:742px;will-change:transform">
<div class="t" style="left:48.50px;top:37px;font-size:12px;line-height:12px;color:#e4e4e4;font-weight:bold;transform:scaleX(0.9909);transform-origin:0 0;">My Lists</div>
<div class="t" style="left:134.70px;top:33px;font-size:20px;line-height:20px;color:#ffffff;font-weight:bold;transform:scaleX(0.9491);transform-origin:0 0;">Annual required compliance package</div>
<div class="t" style="left:1063.70px;top:27px;font-size:12.5px;line-height:12.5px;color:#f4f4f4;letter-spacing:0.107px;">Send List</div>
<div class="t" style="left:1167.50px;top:27px;font-size:12.5px;line-height:12.5px;color:#eeeeee;letter-spacing:0.645px;">Options</div>
<div class="t" style="left:13.70px;top:80px;font-size:20px;line-height:20px;color:#6f6f6f;letter-spacing:0.043px;">List of required compliance training courses, also for new</div>
<div class="t" style="left:14.70px;top:106px;font-size:20px;line-height:20px;color:#6f6f6f;letter-spacing:0.102px;">employee onboarding.</div>
<div class="t" style="left:630.00px;top:79px;font-size:20px;line-height:20px;color:#8e8e8e;font-weight:bold;">7</div>
<div class="t" style="left:630.00px;top:106px;font-size:14px;line-height:14px;color:#727272;letter-spacing:0.028px;">Courses</div>
<div class="t" style="left:835.20px;top:79px;font-size:20px;line-height:20px;color:#8e8e8e;font-weight:bold;transform:scaleX(0.9847);transform-origin:0 0;">3h 12m</div>
<div class="t" style="left:835.50px;top:106px;font-size:14px;line-height:14px;color:#727272;letter-spacing:0.038px;">Seat Time</div>
<div class="t" style="left:1041.00px;top:79px;font-size:20px;line-height:20px;color:#8e8e8e;font-weight:bold;transform:scaleX(0.9297);transform-origin:0 0;">2018 Jan 30</div>
<div class="t" style="left:1040.00px;top:106px;font-size:14px;line-height:14px;color:#727272;letter-spacing:0.500px;">Last Updated</div>
<div class="t" style="left:12.80px;top:173px;font-size:14.5px;line-height:14.5px;color:#727272;transform:scaleX(0.9930);transform-origin:0 0;">Created by Agnes Herba</div>
<div class="t" style="left:12.80px;top:219px;font-size:13.5px;line-height:13.5px;color:#efefef;font-weight:bold;transform:scaleX(0.9531);transform-origin:0 0;">Courses</div>
<div class="t" style="left:48.00px;top:267px;font-size:12.5px;line-height:12.5px;color:#555555;font-weight:bold;transform:scaleX(0.9966);transform-origin:0 0;">0 Selected</div>
<div class="t" style="left:946.00px;top:267px;font-size:12.5px;line-height:12.5px;color:#5a5a5a;font-weight:bold;transform:scaleX(0.9920);transform-origin:0 0;">New Group</div>
<div class="t" style="left:1084.00px;top:268px;font-size:12.5px;line-height:12.5px;color:#6a6a6a;font-weight:bold;transform:scaleX(0.9332);transform-origin:0 0;">Filter This List</div>
<div class="t" style="left:85.50px;top:333px;font-size:10.7px;line-height:10.7px;color:#555;font-weight:bold;transform:scaleX(0.9305);transform-origin:0 0;text-decoration:underline;">TITLE</div>
<div class="t" style="left:487.60px;top:333px;font-size:10.7px;line-height:10.7px;color:#555;font-weight:bold;letter-spacing:0.048px;text-decoration:underline;">RATING</div>
<div class="t" style="left:631.80px;top:333px;font-size:10.7px;line-height:10.7px;color:#555;font-weight:bold;transform:scaleX(0.9381);transform-origin:0 0;">PUBLISHER</div>
<div class="t" style="left:844.70px;top:333px;font-size:10.7px;line-height:10.7px;color:#555;font-weight:bold;transform:scaleX(0.9788);transform-origin:0 0;">LENGTH</div>
<div class="t" style="left:973.00px;top:333px;font-size:10.7px;line-height:10.7px;color:#555;font-weight:bold;transform:scaleX(0.9067);transform-origin:0 0;">PRICE</div>
<div class="t" style="left:1026.00px;top:333px;font-size:10.7px;line-height:10.7px;color:#555;font-weight:bold;transform:scaleX(0.9953);transform-origin:0 0;">DEMO</div>
<div class="t" style="left:1096.00px;top:333px;font-size:10.7px;line-height:10.7px;color:#555;font-weight:bold;transform:scaleX(0.9052);transform-origin:0 0;">FEEDBACK</div>
<div class="t" style="left:78.90px;top:374px;font-size:12px;line-height:12px;color:#333;font-weight:bold;transform:scaleX(0.9703);transform-origin:0 0;">UNGROUPED COURSES</div>
<div class="t" style="left:86.80px;top:419px;font-size:12px;line-height:12px;color:#555;font-weight:bold;letter-spacing:0.200px;">Disability in the Workplace</div>
<div class="t" style="left:632.10px;top:419px;font-size:12.5px;line-height:12.5px;color:#4a4a4a;letter-spacing:0.161px;">vivid</div>
<div class="t" style="left:566.80px;top:419px;font-size:12.5px;line-height:12.5px;color:#4a4a4a;font-style:italic;transform:scaleX(0.8973);transform-origin:0 0;">(12)</div>
<div class="t" style="right:401.15px;top:412px;font-size:12.5px;line-height:12.5px;color:#4a4a4a;">0h</div>
<div class="t" style="right:400.69px;top:427px;font-size:12.5px;line-height:12.5px;color:#4a4a4a;">20m</div>
<div class="t" style="right:285.25px;top:419px;font-size:12.5px;line-height:12.5px;color:#4a4a4a;">$14.00</div>
<div class="t" style="left:916.40px;top:421px;font-size:9px;line-height:9px;color:#ffffff;font-weight:bold;letter-spacing:0.066px;">Plus</div>
<div class="t" style="left:86.80px;top:474px;font-size:12px;line-height:12px;color:#555;font-weight:bold;letter-spacing:0.159px;">Cultural Diversity</div>
<div class="t" style="left:631.10px;top:474px;font-size:12.5px;line-height:12.5px;color:#4a4a4a;letter-spacing:0.160px;">Ed4Online</div>
<div class="t" style="left:566.80px;top:474px;font-size:12.5px;line-height:12.5px;color:#4a4a4a;font-style:italic;transform:scaleX(0.8998);transform-origin:0 0;">(5)</div>
<div class="t" style="right:401.15px;top:467px;font-size:12.5px;line-height:12.5px;color:#4a4a4a;">1h</div>
<div class="t" style="right:400.69px;top:482px;font-size:12.5px;line-height:12.5px;color:#4a4a4a;">30m</div>
<div class="t" style="right:285.25px;top:474px;font-size:12.5px;line-height:12.5px;color:#4a4a4a;">$20.00</div>
<div class="t" style="left:86.80px;top:522px;font-size:12px;line-height:12px;color:#555;font-weight:bold;letter-spacing:0.159px;">Social Engineering (Information Security) Awareness Training</div>
<div class="t" style="left:86.80px;top:537px;font-size:12px;line-height:12px;color:#555;font-weight:bold;letter-spacing:0.181px;">for Employees (with Quiz)</div>
<div class="t" style="left:632.10px;top:529px;font-size:12.5px;line-height:12.5px;color:#4a4a4a;letter-spacing:0.337px;">informationsecurityawareness</div>
<div class="t" style="left:566.80px;top:529px;font-size:12.5px;line-height:12.5px;color:#4a4a4a;font-style:italic;transform:scaleX(0.9381);transform-origin:0 0;">(57)</div>
<div class="t" style="right:401.15px;top:522px;font-size:12.5px;line-height:12.5px;color:#4a4a4a;">0h</div>
<div class="t" style="right:400.69px;top:537px;font-size:12.5px;line-height:12.5px;color:#4a4a4a;">30m</div>
<div class="t" style="right:285.25px;top:529px;font-size:12.5px;line-height:12.5px;color:#4a4a4a;">$10.95</div>
<div class="t" style="left:86.80px;top:584px;font-size:12px;line-height:12px;color:#555;font-weight:bold;letter-spacing:0.241px;">Sexual Harassment Prevention Made Simple</div>
<div class="t" style="left:632.10px;top:584px;font-size:12.5px;line-height:12.5px;color:#4a4a4a;letter-spacing:0.400px;">trainingabc</div>
<div class="t" style="left:566.80px;top:584px;font-size:12.5px;line-height:12.5px;color:#4a4a4a;font-style:italic;transform:scaleX(0.9381);transform-origin:0 0;">(23)</div>
<div class="t" style="right:401.15px;top:577px;font-size:12.5px;line-height:12.5px;color:#4a4a4a;">0h</div>
<div class="t" style="right:400.69px;top:592px;font-size:12.5px;line-height:12.5px;color:#4a4a4a;">15m</div>
<div class="t" style="right:285.25px;top:584px;font-size:12.5px;line-height:12.5px;color:#4a4a4a;">$20.00</div>
<div class="t" style="left:86.80px;top:639px;font-size:12px;line-height:12px;color:#555;font-weight:bold;letter-spacing:0.221px;">Anti-Harassment for Everyone</div>
<div class="t" style="left:632.10px;top:639px;font-size:12.5px;line-height:12.5px;color:#4a4a4a;transform:scaleX(0.9863);transform-origin:0 0;">ej4</div>
<div class="t" style="left:566.80px;top:639px;font-size:12.5px;line-height:12.5px;color:#4a4a4a;font-style:italic;transform:scaleX(0.9381);transform-origin:0 0;">(52)</div>
<div class="t" style="right:401.15px;top:632px;font-size:12.5px;line-height:12.5px;color:#4a4a4a;">0h</div>
<div class="t" style="right:400.69px;top:647px;font-size:12.5px;line-height:12.5px;color:#4a4a4a;">10m</div>
<div class="t" style="right:285.25px;top:639px;font-size:12.5px;line-height:12.5px;color:#4a4a4a;">$4.99</div>
<div class="t" style="left:924.20px;top:641px;font-size:9px;line-height:9px;color:#ffffff;font-weight:bold;letter-spacing:0.066px;">Plus</div>
<div class="t" style="left:86.80px;top:694px;font-size:12px;line-height:12px;color:#555;font-weight:bold;letter-spacing:0.134px;">Payment Card Industry Data Security Standards (PCI DSS)</div>
<div class="t" style="left:631.10px;top:694px;font-size:12.5px;line-height:12.5px;color:#4a4a4a;letter-spacing:0.587px;">Litmos</div>
<div class="t" style="left:566.80px;top:694px;font-size:12.5px;line-height:12.5px;color:#4a4a4a;font-style:italic;transform:scaleX(0.9381);transform-origin:0 0;">(31)</div>
<div class="t" style="right:401.15px;top:687px;font-size:12.5px;line-height:12.5px;color:#4a4a4a;">0h</div>
<div class="t" style="right:400.69px;top:702px;font-size:12.5px;line-height:12.5px;color:#4a4a4a;">20m</div>
<div class="t" style="right:285.25px;top:694px;font-size:12.5px;line-height:12.5px;color:#4a4a4a;">$19.00</div>
<div class="t" style="left:917.00px;top:696px;font-size:9px;line-height:9px;color:#ffffff;font-weight:bold;letter-spacing:0.066px;">Plus</div>
</div>
<svg style="left:0;top:0" width="1273" height="742" viewBox="0 0 1273 742"><polygon points="1264.2,242.8 1267.7,247.1 1190.3,309.1 1196.7,317.7 1158.4,330.3 1179.5,296.1 1186.4,304.6" fill="#ff0000"/></svg>
</body></html>
